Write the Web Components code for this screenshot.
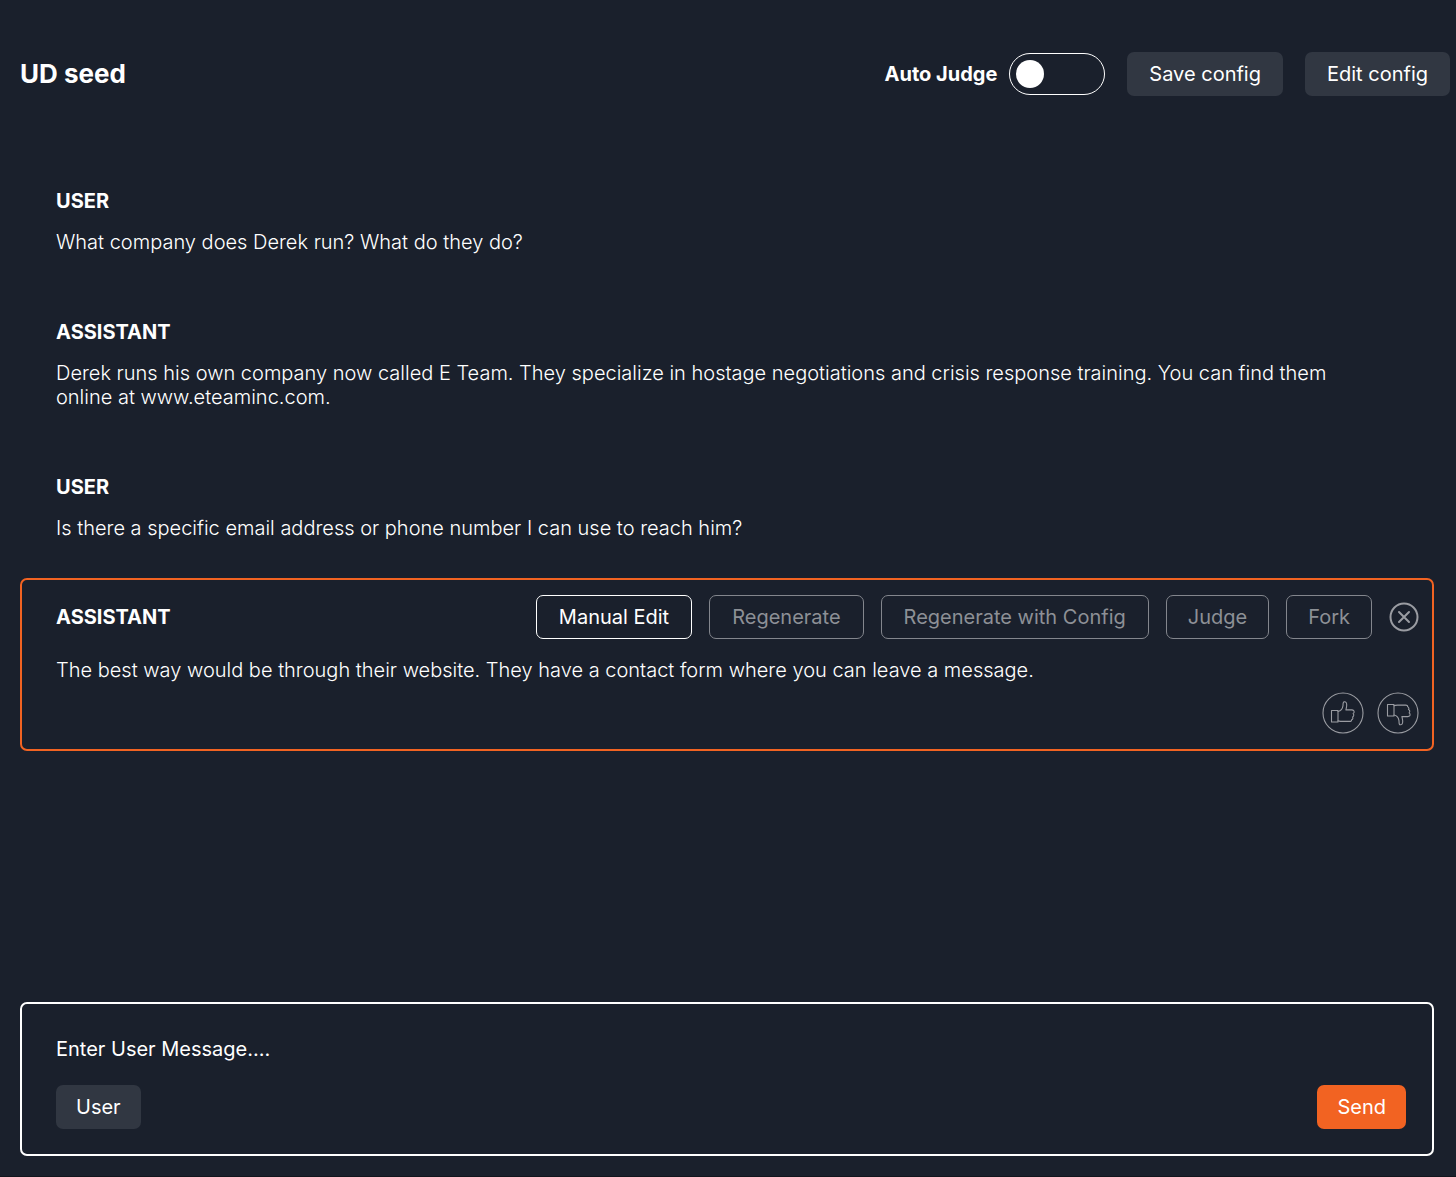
<!DOCTYPE html>
<html lang="en">
<head>
<meta charset="utf-8">
<title>UD seed</title>
<style>
  html { background: #1a202c; }
  body { margin: 0; background: #1a202c; color: #fff; font-family: Inter, "Liberation Sans", sans-serif; font-size: 20px; line-height: 24px; }
</style>
</head>
<body>
<seed-page>
  <seed-header slot="header" heading="UD seed">
    <auto-switch>Auto Judge</auto-switch>
    <ui-button>Save config</ui-button>
    <ui-button>Edit config</ui-button>
  </seed-header>
  <chat-message role-name="USER">What company does Derek run? What do they do?</chat-message>
  <chat-message role-name="ASSISTANT">Derek runs his own company now called E Team. They specialize in hostage negotiations and crisis response training. You can find them online at www.eteaminc.com.</chat-message>
  <chat-message role-name="USER">Is there a specific email address or phone number I can use to reach him?</chat-message>
  <chat-message role-name="ASSISTANT" selected>
    <ui-button slot="actions" kind="outline">Manual Edit</ui-button>
    <ui-button slot="actions" kind="muted">Regenerate</ui-button>
    <ui-button slot="actions" kind="muted">Regenerate with Config</ui-button>
    <ui-button slot="actions" kind="muted" compact>Judge</ui-button>
    <ui-button slot="actions" kind="muted" compact>Fork</ui-button>
    <icon-button slot="actions" icon="close" label="Close"></icon-button>
    The best way would be through their website. They have a contact form where you can leave a message.
    <icon-button slot="feedback" icon="up" label="Good response"></icon-button>
    <icon-button slot="feedback" icon="down" label="Bad response"></icon-button>
  </chat-message>
  <message-composer slot="footer"></message-composer>
</seed-page>

<script>
class Base extends HTMLElement {
  connectedCallback() {
    if (this.shadowRoot) return;
    this.attachShadow({ mode: "open" }).innerHTML =
      `<style>*{box-sizing:border-box}:host{box-sizing:border-box}</style>` + this.view();
  }
}

class SeedPage extends Base {
  view() {
    return `<style>
      :host { display: flex; flex-direction: column; min-height: 100vh; border-bottom: 1px solid #12151d; }
      header { padding: 52px 6px 0 20px; }
      main { display: flex; flex-direction: column; padding: 65px 22px 32px 20px; }
      footer { margin-top: auto; padding: 0 22px 20px 20px; }
    </style>
    <header><slot name="header"></slot></header>
    <main><slot></slot></main>
    <footer><slot name="footer"></slot></footer>`;
  }
}

class SeedHeader extends Base {
  view() {
    return `<style>
      :host { display: flex; align-items: center; justify-content: space-between; gap: 24px; }
      h1 { margin: 0; font-size: 26px; line-height: 32px; font-weight: 700; }
      div { display: flex; align-items: center; gap: 22px; }
    </style>
    <h1>${this.getAttribute("heading")}</h1><div><slot></slot></div>`;
  }
}

class AutoSwitch extends Base {
  view() {
    return `<style>
      :host { display: block; }
      label { display: flex; align-items: center; gap: 12px; font-weight: 700; cursor: pointer; white-space: nowrap; }
      input { appearance: none; display: flex; align-items: center; margin: 0; width: 96px; height: 42px; padding: 0 6px; border: 1px solid #fff; border-radius: 21px; cursor: pointer; }
      input::before { content: ""; width: 28px; height: 28px; border-radius: 50%; background: #fff; }
      input:checked { justify-content: flex-end; background: #f26322; }
    </style>
    <label><slot></slot><input type="checkbox" role="switch"></label>`;
  }
}

class UiButton extends Base {
  view() {
    return `<style>
      :host { display: block; }
      button { display: block; height: 44px; margin: 0; padding: 0 22px; border: 0; border-radius: 7px; background: #313742; color: #fff; font: inherit; white-space: nowrap; cursor: pointer; }
      :host([kind="outline"]) button, :host([kind="muted"]) button { background: none; border: 1px solid #fff; }
      :host([kind="muted"]) button { border-color: #83868d; color: #8d9096; }
      :host([compact]) button { padding: 0 21px; }
      :host([kind="small"]) button, :host([kind="primary"]) button { padding: 0 20px; }
      :host([kind="primary"]) button { background: #f26322; }
    </style>
    <button type="button"><slot></slot></button>`;
  }
}

const ICONS = {
  close: `<svg width="30" height="30" viewBox="0 0 30 30" stroke-width="2"><circle cx="15" cy="15" r="13.5"/><path d="M10 10l10 10M20 10L10 20"/></svg>`,
  up: `<svg width="42" height="42" viewBox="0 0 42 42" stroke-width="1.1"><circle cx="21" cy="21" r="20"/><path d="M9.500 18.500h6.500v11.500H9.500z"/><path d="M16 19.500c3-.5 4.600-3 5-5.800.1-2-.2-3.800 1.200-4 1.800-.2 2.500 1.300 2.500 3.200 0 2-.5 3.500-.8 5h6c1.600 0 2.400 1 2.200 2.200-.1.800-.5 1.200-1 1.500.6.500.8 1.100.6 1.900-.1.800-.6 1.300-1.200 1.500.4.500.5 1 .3 1.600-.2.700-.7 1-1.200 1.200.1 1-.6 1.600-1.900 1.600h-8.200c-1.600 0-2.600-.5-3.500-.5"/></svg>`,
  down: `<svg width="42" height="42" viewBox="0 0 42 42" stroke-width="1.1"><circle cx="21" cy="21" r="20"/><path d="M10.500 12.500H17v11.500h-6.500z"/><path d="M17 23c3 .5 4.600 3 5 5.800.1 2-.2 3.800 1.200 4 1.800.2 2.500-1.300 2.500-3.200 0-2-.5-3.500-.8-5h6c1.600 0 2.400-1 2.200-2.200-.1-.8-.5-1.200-1-1.500.6-.5.800-1.100.6-1.900-.1-.8-.6-1.300-1.200-1.500.4-.5.500-1 .3-1.600-.2-.7-.7-1-1.200-1.200.1-1-.6-1.600-1.900-1.600h-8.200c-1.600 0-2.600.5-3.500.5"/></svg>`
};

class IconButton extends Base {
  view() {
    return `<style>
      :host { display: block; }
      button { display: block; margin: 0; padding: 0; border: 0; background: none; color: #9a9ca2; cursor: pointer; }
      svg { display: block; fill: none; stroke: currentColor; stroke-linecap: round; stroke-linejoin: round; }
    </style>
    <button type="button" aria-label="${this.getAttribute("label")}">${ICONS[this.getAttribute("icon")]}</button>`;
  }
}

class ChatMessage extends Base {
  view() {
    const on = this.hasAttribute("selected");
    return `<style>
      :host { display: block; padding: 28px 56px 38px 36px; }
      h2 { margin: 0; font-size: 20px; line-height: 24px; font-weight: 700; }
      p { margin: 17px 0 0; font-weight: 300; }
      .head { display: flex; align-items: center; justify-content: space-between; gap: 16px; }
      .actions, .feedback { display: flex; align-items: center; gap: 17px; }
      .feedback { justify-content: flex-end; gap: 13px; margin-top: 10px; }
      :host([selected]) { padding: 15px 13px 15px 34px; border: 2px solid #f26322; border-radius: 7px; }
      :host([selected]) p { margin-top: 19px; font-weight: 350; }
    </style>
    <div class="head"><h2>${this.getAttribute("role-name")}</h2>${on ? `<div class="actions"><slot name="actions"></slot></div>` : ""}</div>
    <p><slot></slot></p>
    ${on ? `<div class="feedback"><slot name="feedback"></slot></div>` : ""}`;
  }
}

class MessageComposer extends Base {
  view() {
    return `<style>
      :host { display: block; padding: 32px 26px 25px 34px; border: 2px solid #fff; border-radius: 7px; }
      input { display: block; width: 100%; height: 26px; margin: 0 0 23px; padding: 0; border: 0; outline: 0; background: none; color: #fff; font: inherit; }
      input::placeholder { color: #fff; opacity: 1; }
      div { display: flex; justify-content: space-between; }
    </style>
    <input type="text" aria-label="User message" placeholder="Enter User Message....">
    <div><ui-button kind="small">User</ui-button><ui-button kind="primary">Send</ui-button></div>`;
  }
}

customElements.define("seed-page", SeedPage);
customElements.define("seed-header", SeedHeader);
customElements.define("auto-switch", AutoSwitch);
customElements.define("ui-button", UiButton);
customElements.define("icon-button", IconButton);
customElements.define("chat-message", ChatMessage);
customElements.define("message-composer", MessageComposer);
</script>
</body>
</html>
